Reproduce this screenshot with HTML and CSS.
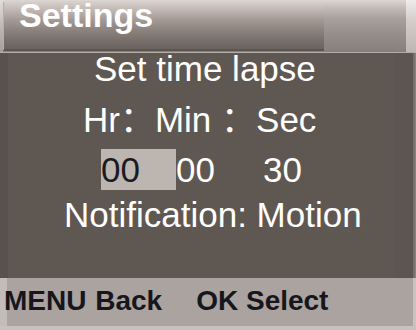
FILE: index.html
```html
<!DOCTYPE html>
<html>
<head>
<meta charset="utf-8">
<link rel="stylesheet" href="styles.css">
</head>
<body>
<div class="screen">
  <header class="hdr">
    <div class="edge-l"></div>
    <div class="title-bar"><h1 class="title">Settings</h1></div>
    <div class="hdr-fill"></div>
    <div class="hdr-edge"></div>
  </header>
  <div class="sep"></div>
  <main class="body">
    <div class="side-l"></div>
    <section class="panel">
      <div class="row row-1">Set time lapse</div>
      <div class="row row-2">Hr：Min ：Sec</div>
      <div class="row row-3">
        <span class="field sel">00</span>
        <span class="field">00</span>
        <span class="field sec">30</span>
      </div>
      <div class="row row-4">Notification: Motion</div>
    </section>
    <div class="side-r"></div>
  </main>
  <footer class="ftr">
    <span class="hint">MENU Back</span>
    <span class="hint hint-ok">OK Select</span>
  </footer>
  <div class="base"></div>
</div>
</body>
</html>
```

FILE: styles.css
```css
html, body {
  margin: 0;
  padding: 0;
  background: #5f5752;
}

.screen {
  width: 416px;
  height: 330px;
  overflow: hidden;
  display: flex;
  flex-direction: column;
  font-family: "Liberation Sans", Arial, "Noto Sans CJK SC", sans-serif;
}

/* ---------- header ---------- */
.hdr {
  height: 52px;
  display: flex;
  flex: none;
  background: linear-gradient(to bottom, #dcd7d4 0%, #c4bdb9 14%, #a8a19d 35%, #958e8a 65%, #877f7b 100%);
}

.edge-l {
  width: 3px;
  background: linear-gradient(to bottom, #e2dedb, #b9b2ae 60%, #a59e9a);
}

.title-bar {
  width: 321px;
  height: 49px;
  margin-top: 2px;
  box-sizing: border-box;
  border-left: 1px solid #b5aeaa;
  border-bottom: 2px solid #5c544f;
  background: linear-gradient(to bottom, #d6cfca 0%, #c2b9b4 16%, #a39a95 38%, #8c837e 60%, #766d69 85%, #6a625e 100%);
}

.title {
  margin: 0;
  padding-left: 15px;
  font-size: 34px;
  line-height: 27px;
  font-weight: bold;
  color: #ffffff;
}

.hdr-fill {
  flex: 1;
}

.hdr-edge {
  width: 10px;
  background: linear-gradient(to bottom, #eeebea, #d3cecb 40%, #bdb7b3);
}

.sep {
  height: 1px;
  flex: none;
  background: #b3aca8;
}

/* ---------- body ---------- */
.body {
  height: 225px;
  flex: none;
  display: flex;
}

.side-l {
  width: 8px;
  background: #59514d;
}

.side-r {
  width: 21px;
  background: linear-gradient(to right, #5d5551 0 18px, #77706c 18px 20px, #8a8480 20px);
}

.panel {
  flex: 1;
  background: #5f5752;
  color: #ffffff;
  font-size: 35px;
  line-height: 32px;
}

.row {
  white-space: pre;
}

.row-1 {
  padding-left: 86px;
}

.row-2 {
  margin-top: 19px;
  padding-left: 75px;
}

.row-3 {
  margin-top: 13px;
  padding-left: 93px;
  display: flex;
  height: 41px;
  line-height: 41px;
}

.field.sel {
  width: 75px;
  background: #bcb5b0;
  color: #1b1a22;
}

.field.sec {
  margin-left: 48px;
}

.row-4 {
  margin-top: 9px;
  padding-left: 56px;
}

/* ---------- footer ---------- */
.ftr {
  height: 48px;
  flex: none;
  box-sizing: border-box;
  padding: 9px 0 0 4px;
  display: flex;
  background: linear-gradient(to right, #c3bdb9 0 7px, #aba39f 7px 413px, #c9c3bf 413px);
  color: #17161d;
  font-size: 28px;
  line-height: 27px;
  font-weight: bold;
  word-spacing: 1px;
}

.hint {
  white-space: pre;
}

.hint-ok {
  margin-left: 34px;
  word-spacing: 0;
}

.base {
  flex: 1;
  background: #c8c2be;
}
```
